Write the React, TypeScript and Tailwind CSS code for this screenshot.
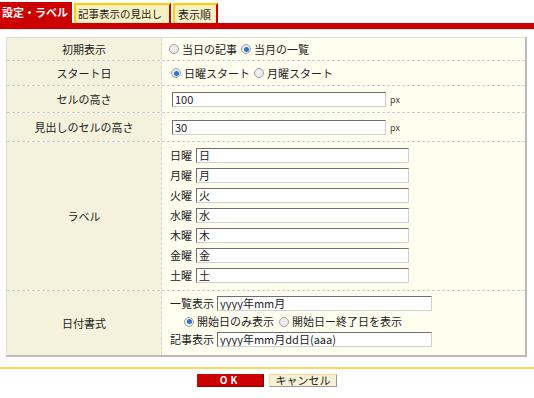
import { ReactNode } from "react";

function Radio({ checked, label }: { checked?: boolean; label: string }) {
  return (
    <span className="inline-flex items-center">
      <span className="w-[10px] h-[10px] rounded-full border border-[#a0a0a0] bg-[#ececec] flex items-center justify-center">
        {checked && <span className="w-[5px] h-[5px] rounded-full bg-[#2a72d8]" />}
      </span>
      <span className="ml-[3px]">{label}</span>
    </span>
  );
}

function TextBox({ value, w }: { value: string; w: string }) {
  return (
    <div
      className={`${w} h-[15px] bg-white border-t border-l border-t-[#707070] border-l-[#707070] border-b border-r border-b-[#d0d0d0] border-r-[#d0d0d0] pl-[2px] text-[11px] leading-[13px] whitespace-nowrap overflow-hidden`}
    >
      {value}
    </div>
  );
}

function Row({
  label,
  h,
  last,
  children,
}: {
  label: string;
  h: string;
  last?: boolean;
  children: ReactNode;
}) {
  return (
    <div
      className={`grid grid-cols-[155px_1fr] ${h} ${
        last ? "" : "border-b border-dashed border-[#cccccc]"
      }`}
    >
      <div className="bg-[#f4f2dc] flex items-center justify-center border-r border-dashed border-[#d8d8d8]">
        {label}
      </div>
      <div className="bg-[#fffff0]">{children}</div>
    </div>
  );
}

const days = [
  ["日曜", "日"],
  ["月曜", "月"],
  ["火曜", "火"],
  ["水曜", "水"],
  ["木曜", "木"],
  ["金曜", "金"],
  ["土曜", "土"],
];

export default function App() {
  return (
    <div className="w-[534px] h-[398px] bg-white text-[11px] leading-none text-[#222] font-['Noto_Sans_CJK_JP','Noto_Sans',sans-serif] overflow-hidden">
      {/* tabs */}
      <div className="flex items-end h-[23px] gap-[2px]">
        <div className="h-[21px] w-[72px] bg-[#cc0000] text-white font-bold flex items-center pl-[2px]">
          設定・ラベル
        </div>
        <div className="h-[20px] w-[97px] bg-[#f6f0c4] border-l-2 border-t-2 border-r-2 border-l-[#ffcc00] border-t-[#ffcc00] border-r-[#cc0000] flex items-center pl-[2px] text-[10.5px]">
          記事表示の見出し
        </div>
        <div className="h-[20px] w-[45px] bg-[#f6f0c4] border-l-2 border-t-2 border-r-2 border-l-[#ffcc00] border-t-[#ffcc00] border-r-[#cc0000] flex items-center pl-[3px]">
          表示順
        </div>
      </div>
      <div className="h-[6px] bg-[#cc0000]" />
      <div className="h-[1px] bg-[#e6e6e6]" />

      {/* settings table */}
      <div className="px-[6px] pt-[7px]">
        <div className="w-[521px] border-t border-l border-t-[#dddddd] border-l-[#dddddd] border-r-2 border-b-2 border-r-[#bbbbbb] border-b-[#bbbbbb]">
          <Row label="初期表示" h="h-[23px]">
            <div className="h-full flex items-center pl-[7px] gap-[4px]">
              <Radio label="当日の記事" />
              <Radio checked label="当月の一覧" />
            </div>
          </Row>
          <Row label="スタート日" h="h-[25px]">
            <div className="h-full flex items-center pl-[9px] gap-[4px]">
              <Radio checked label="日曜スタート" />
              <Radio label="月曜スタート" />
            </div>
          </Row>
          <Row label="セルの高さ" h="h-[27px]">
            <div className="h-full flex items-center pl-[10px] gap-[4px]">
              <TextBox value="100" w="w-[214px]" />
              <span className="text-[9px] text-[#444]">px</span>
            </div>
          </Row>
          <Row label="見出しのセルの高さ" h="h-[29px]">
            <div className="h-full flex items-center pl-[10px] gap-[4px]">
              <TextBox value="30" w="w-[214px]" />
              <span className="text-[9px] text-[#444]">px</span>
            </div>
          </Row>
          <Row label="ラベル" h="h-[149px]">
            <div className="flex flex-col gap-[5px] pl-[8px] pt-[6px]">
              {days.map(([k, v]) => (
                <div key={k} className="flex items-center gap-[4px]">
                  <span className="w-[22px]">{k}</span>
                  <TextBox value={v} w="w-[213px]" />
                </div>
              ))}
            </div>
          </Row>
          <Row label="日付書式" h="h-[64px]" last>
            <div className="flex flex-col pl-[8px] pt-[5px] gap-[4px]">
              <div className="flex items-center gap-[3px]">
                <span>一覧表示</span>
                <TextBox value="yyyy年mm月" w="w-[215px]" />
              </div>
              <div className="flex items-center pl-[14px] gap-[5px] h-[13px]">
                <Radio checked label="開始日のみ表示" />
                <Radio label="開始日ー終了日を表示" />
              </div>
              <div className="flex items-center gap-[3px]">
                <span>記事表示</span>
                <TextBox value="yyyy年mm月dd日(aaa)" w="w-[215px]" />
              </div>
            </div>
          </Row>
        </div>
      </div>

      {/* footer */}
      <div className="mt-[10px] h-[2px] bg-[#ffd75e]" />
      <div className="flex justify-center gap-[5px] pt-[5px]">
        <button className="w-[67px] h-[13px] bg-[#cc0000] border-b border-r border-[#8a0000] text-white font-bold text-[10px] tracking-[3px] flex items-center justify-center leading-none">
          OK
        </button>
        <button className="w-[68px] h-[13px] bg-[#f8f3d6] border-t border-l border-t-[#ffd88a] border-l-[#ffd88a] border-b border-r border-b-[#999999] border-r-[#999999] text-[11px] flex items-center justify-center leading-none">
          キャンセル
        </button>
      </div>
    </div>
  );
}
